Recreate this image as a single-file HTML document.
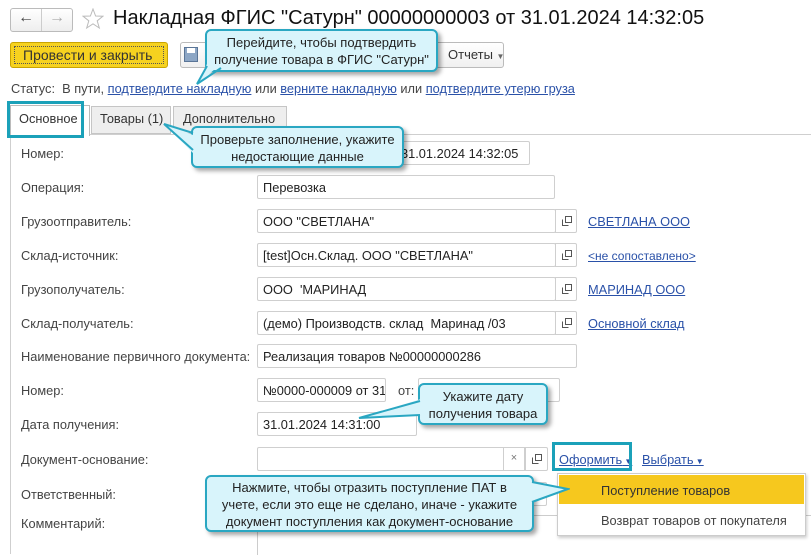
<!DOCTYPE html>
<html><head><meta charset="utf-8"><style>
*{box-sizing:border-box;margin:0;padding:0}
body{width:811px;height:549px;overflow:hidden;background:#fff;font-family:"Liberation Sans",Arial,sans-serif;font-size:12.8px;color:#333;position:relative}
.a{position:absolute;white-space:nowrap}
.lbl{position:absolute;left:21px;color:#444}
.f{position:absolute;height:24px;border:1px solid #cfcfcf;border-radius:2px;background:#fff;padding:4px 5px;color:#222;white-space:nowrap;overflow:hidden}
.fb{position:absolute;width:22px;height:24px;border:1px solid #cfcfcf;border-radius:0 2px 2px 0;background:#fff}
.lnk{position:absolute;color:#2a51a8;text-decoration:underline;white-space:nowrap}
.call{position:absolute;background:#d8f4fb;border:2px solid #2aa7c2;border-radius:6px;box-shadow:3px 3px 4px rgba(0,0,0,.35);text-align:center;color:#222;font-size:13px;line-height:17px;z-index:5}
.teal{position:absolute;border:3px solid #1ba1b9;z-index:4}
</style></head><body>
<div class="a" style="left:10px;top:8px;width:63px;height:24px;border:1px solid #bbb;border-radius:3px;background:linear-gradient(#fff,#eee)"></div>
<div class="a" style="left:41px;top:9px;width:1px;height:22px;background:#ccc"></div>
<div class="a" style="left:18px;top:9px;font-size:16px;color:#444">&#8592;</div>
<div class="a" style="left:49px;top:9px;font-size:16px;color:#aaa">&#8594;</div>
<svg class="a" style="left:82px;top:8px" width="22" height="22" viewBox="0 0 22 22"><polygon points="11,1 13.6,8 21,8.2 15.2,12.8 17.3,20 11,15.8 4.7,20 6.8,12.8 1,8.2 8.4,8" fill="none" stroke="#bbb" stroke-width="1"/></svg>
<div class="a" style="left:113px;top:7px;font-size:20px;color:#111">Накладная ФГИС "Сатурн" 00000000003 от 31.01.2024 14:32:05</div>
<div class="a" style="left:10px;top:42px;width:158px;height:26px;background:#f6d21f;border:1px solid #c9a400;border-radius:3px"></div>
<div class="a" style="left:14px;top:46px;width:150px;height:18px;border:1px dotted #555"></div>
<div class="a" style="left:23px;top:47px;font-size:14px;color:#333">Провести и закрыть</div>
<div class="a" style="left:180px;top:42px;width:324px;height:26px;border:1px solid #bbb;border-radius:3px;background:linear-gradient(#fff,#f0f0f0)"></div>
<svg class="a" style="left:184px;top:47px" width="14" height="15"><rect x="0.5" y="0.5" width="13" height="14" fill="#8ca6c5" stroke="#5a7597"/><rect x="3" y="1" width="8" height="5" fill="#fff"/></svg>
<div class="a" style="left:448px;top:47px;color:#333;font-size:13px">Отчеты <span style="font-size:8px;color:#666">&#9660;</span></div>
<div class="a" style="left:11px;top:81px;color:#444">Статус: &nbsp;В пути, <span style="color:#2a51a8;text-decoration:underline">подтвердите накладную</span> или <span style="color:#2a51a8;text-decoration:underline">верните накладную</span> или <span style="color:#2a51a8;text-decoration:underline">подтвердите утерю груза</span></div>
<div class="a" style="left:10px;top:134px;width:801px;height:420px;border-left:1px solid #cfcfcf;border-top:1px solid #cfcfcf"></div>
<div class="a" style="left:10px;top:105px;width:80px;height:31px;background:#fff;border:1px solid #bbb;border-bottom:none"></div>
<div class="a" style="left:91px;top:106px;width:80px;height:28px;background:#eee;border:1px solid #c5c5c5"></div>
<div class="a" style="left:173px;top:106px;width:114px;height:28px;background:#eee;border:1px solid #c5c5c5"></div>
<div class="a" style="left:19px;top:111px;color:#333">Основное</div>
<div class="a" style="left:100px;top:111px;color:#333">Товары (1)</div>
<div class="a" style="left:183px;top:111px;color:#333">Дополнительно</div>
<div class="teal" style="left:7px;top:101px;width:77px;height:37px"></div>
<div class="lbl" style="top:146px">Номер:</div>
<div class="f" style="left:395px;top:141px;width:135px">31.01.2024 14:32:05</div>
<div class="lbl" style="top:180px">Операция:</div>
<div class="f" style="left:257px;top:175px;width:298px">Перевозка</div>
<div class="lbl" style="top:214px">Грузоотправитель:</div>
<div class="f" style="left:257px;top:209px;width:299px">ООО "СВЕТЛАНА"</div>
<div class="fb" style="left:555px;top:209px"></div>
<div class="lnk" style="left:588px;top:214px">СВЕТЛАНА ООО</div>
<div class="lbl" style="top:248px">Склад-источник:</div>
<div class="f" style="left:257px;top:243px;width:299px">[test]Осн.Склад. ООО "СВЕТЛАНА"</div>
<div class="fb" style="left:555px;top:243px"></div>
<div class="lnk" style="left:588px;top:249px;font-size:12px">&lt;не сопоставлено&gt;</div>
<div class="lbl" style="top:282px">Грузополучатель:</div>
<div class="f" style="left:257px;top:277px;width:299px">ООО &nbsp;'МАРИНАД</div>
<div class="fb" style="left:555px;top:277px"></div>
<div class="lnk" style="left:588px;top:282px">МАРИНАД ООО</div>
<div class="lbl" style="top:316px">Склад-получатель:</div>
<div class="f" style="left:257px;top:311px;width:299px">(демо) Производств. склад &nbsp;Маринад /03</div>
<div class="fb" style="left:555px;top:311px"></div>
<div class="lnk" style="left:588px;top:316px">Основной склад</div>
<div class="lbl" style="top:349px">Наименование первичного документа:</div>
<div class="f" style="left:257px;top:344px;width:320px">Реализация товаров №00000000286</div>
<div class="lbl" style="top:383px">Номер:</div>
<div class="f" style="left:257px;top:378px;width:129px">№0000-000009 от 31</div>
<div class="a" style="left:398px;top:383px;color:#444">от:</div>
<div class="f" style="left:418px;top:378px;width:142px"></div>
<div class="lbl" style="top:417px">Дата получения:</div>
<div class="f" style="left:257px;top:412px;width:160px">31.01.2024 14:31:00</div>
<div class="lbl" style="top:452px">Документ-основание:</div>
<div class="f" style="left:257px;top:447px;width:270px"></div>
<div class="fb" style="left:503px;top:447px;border-radius:0;text-align:center;color:#777;font-size:11px;padding-top:4px">×</div>
<div class="fb" style="left:525px;top:447px;width:23px"></div>
<div class="lnk" style="left:559px;top:452px">Оформить<span style="font-size:8px;text-decoration:none"> &#9660;</span></div>
<div class="teal" style="left:552px;top:442px;width:80px;height:29px"></div>
<div class="lnk" style="left:642px;top:452px">Выбрать<span style="font-size:8px;text-decoration:none"> &#9660;</span></div>
<div class="lbl" style="top:487px">Ответственный:</div>
<div class="f" style="left:257px;top:482px;width:290px"></div>
<div class="lbl" style="top:516px">Комментарий:</div>
<div class="a" style="left:257px;top:515px;width:560px;height:1px;background:#ccc"></div>
<div class="a" style="left:257px;top:515px;width:1px;height:40px;background:#ccc"></div>
<svg class="a" style="left:561px;top:215px" width="12" height="12"><path d="M4.5 1.5h6v6h-6zM1.5 4.5v6h6" fill="none" stroke="#555"/></svg>
<svg class="a" style="left:561px;top:249px" width="12" height="12"><path d="M4.5 1.5h6v6h-6zM1.5 4.5v6h6" fill="none" stroke="#555"/></svg>
<svg class="a" style="left:561px;top:283px" width="12" height="12"><path d="M4.5 1.5h6v6h-6zM1.5 4.5v6h6" fill="none" stroke="#555"/></svg>
<svg class="a" style="left:561px;top:317px" width="12" height="12"><path d="M4.5 1.5h6v6h-6zM1.5 4.5v6h6" fill="none" stroke="#555"/></svg>
<svg class="a" style="left:531px;top:453px" width="12" height="12"><path d="M4.5 1.5h6v6h-6zM1.5 4.5v6h6" fill="none" stroke="#555"/></svg>
<div class="a" style="left:557px;top:473px;width:249px;height:63px;background:#fff;border:1px solid #ccc;box-shadow:1px 2px 3px rgba(0,0,0,.2);z-index:3"></div>
<div class="a" style="left:559px;top:475px;width:245px;height:29px;background:#f6c81e;z-index:3"></div>
<div class="a" style="left:601px;top:483px;color:#333;z-index:3">Поступление товаров</div>
<div class="a" style="left:601px;top:513px;color:#444;z-index:3">Возврат товаров от покупателя</div>
<svg class="a" style="left:185px;top:60px;z-index:6" width="40" height="26"><polygon points="12,24 22,4 36,4" fill="#d8f4fb"/><polyline points="22,6 12,24 36,8" fill="none" stroke="#2aa7c2" stroke-width="2"/></svg>
<div class="call" style="left:205px;top:29px;width:233px;height:43px;padding-top:3px">Перейдите, чтобы подтвердить<br>получение товара в ФГИС "Сатурн"</div>
<svg class="a" style="left:160px;top:120px;z-index:6" width="40" height="40"><polygon points="4,4 33,15 33,33" fill="#d8f4fb"/><polyline points="33,13 4,4 33,30" fill="none" stroke="#2aa7c2" stroke-width="2"/></svg>
<div class="call" style="left:191px;top:126px;width:213px;height:42px;padding-top:3px">Проверьте заполнение, укажите<br>недостающие данные</div>
<svg class="a" style="left:355px;top:395px;z-index:6" width="68" height="30"><polygon points="4,23 66,4 66,20" fill="#d8f4fb"/><polyline points="65,6 4,23 65,20" fill="none" stroke="#2aa7c2" stroke-width="2"/></svg>
<div class="call" style="left:418px;top:383px;width:130px;height:42px;padding-top:3px">Укажите дату<br>получения товара</div>
<svg class="a" style="left:528px;top:478px;z-index:6" width="42" height="30"><polygon points="2,4 40,11 2,24" fill="#d8f4fb"/><polyline points="4,4 40,11 4,24" fill="none" stroke="#2aa7c2" stroke-width="2"/></svg>
<div class="call" style="left:205px;top:475px;width:329px;height:57px;padding-top:2px">Нажмите, чтобы отразить поступление ПАТ в<br>учете, если это еще не сделано, иначе - укажите<br>документ поступления как документ-основание</div>
</body></html>
